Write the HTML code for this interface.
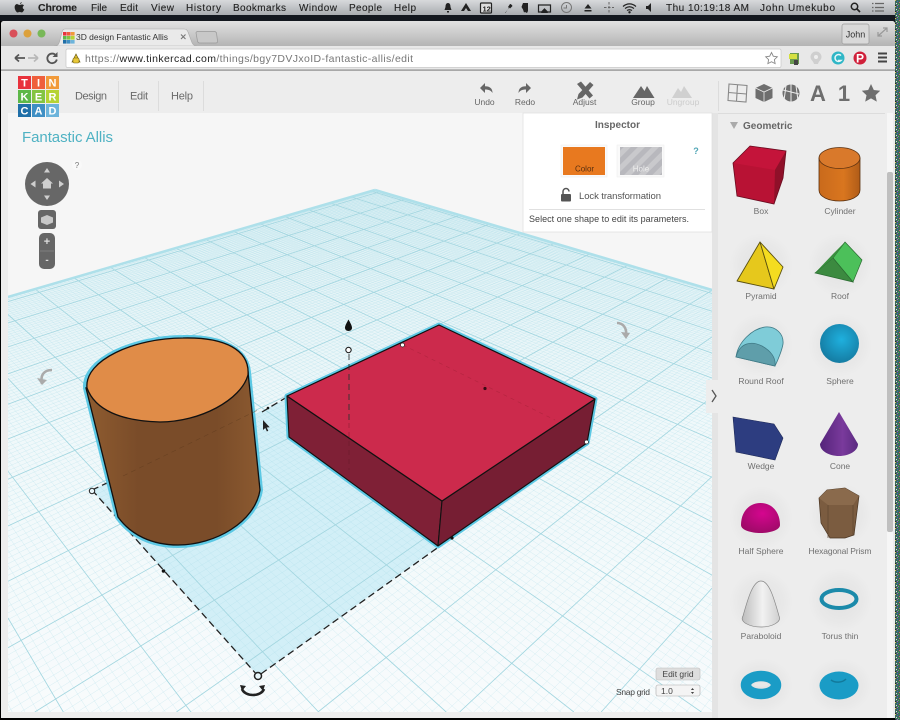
<!DOCTYPE html>
<html><head><meta charset="utf-8"><title>Tinkercad</title>
<style>
html,body{margin:0;padding:0;background:#000;width:900px;height:720px;overflow:hidden}
svg{display:block;filter:blur(.35px)}
text{font-family:"Liberation Sans",sans-serif}
</style></head><body>
<svg xmlns="http://www.w3.org/2000/svg" width="900" height="720" viewBox="0 0 900 720">
<defs>
<linearGradient id="mb" x1="0" y1="0" x2="0" y2="1"><stop offset="0" stop-color="#d8dadc"/><stop offset="1" stop-color="#a9acb0"/></linearGradient>
<linearGradient id="tb" x1="0" y1="0" x2="0" y2="1"><stop offset="0" stop-color="#e2e2e2"/><stop offset="1" stop-color="#b4b4b4"/></linearGradient>
<linearGradient id="pl" x1="0" y1="190" x2="0" y2="712" gradientUnits="userSpaceOnUse"><stop offset="0" stop-color="#dcf0f4"/><stop offset=".45" stop-color="#eff8fa"/><stop offset="1" stop-color="#f8fbfc"/></linearGradient>
<linearGradient id="cyl" x1="0" y1="0" x2="1" y2="0"><stop offset="0" stop-color="#8f5c30"/><stop offset=".3" stop-color="#7a4c29"/><stop offset=".75" stop-color="#7a4c29"/><stop offset="1" stop-color="#8c5a30"/></linearGradient>
<linearGradient id="icyl" x1="0" y1="0" x2="1" y2="0"><stop offset="0" stop-color="#c96a1c"/><stop offset=".6" stop-color="#d9761f"/><stop offset="1" stop-color="#b05c18"/></linearGradient>
<radialGradient id="isph" cx=".55" cy=".4" r=".65"><stop offset="0" stop-color="#1fb0de"/><stop offset="1" stop-color="#14789e"/></radialGradient>
<radialGradient id="ihalf" cx=".55" cy=".35" r=".7"><stop offset="0" stop-color="#d5068f"/><stop offset="1" stop-color="#9c0a66"/></radialGradient>
<linearGradient id="ipar" x1="0" y1="0" x2="1" y2="0"><stop offset="0" stop-color="#bdbdbd"/><stop offset=".55" stop-color="#f2f2f2"/><stop offset="1" stop-color="#cfcfcf"/></linearGradient>
<linearGradient id="icone" x1="0" y1="0" x2="1" y2="0"><stop offset="0" stop-color="#54247a"/><stop offset=".6" stop-color="#7a3a9c"/><stop offset="1" stop-color="#5a2a80"/></linearGradient>
<radialGradient id="sh"><stop offset="0" stop-color="#000" stop-opacity=".05"/><stop offset=".7" stop-color="#000" stop-opacity=".02"/><stop offset="1" stop-color="#000" stop-opacity="0"/></radialGradient>
<pattern id="hole" width="10" height="10" patternUnits="userSpaceOnUse" patternTransform="rotate(45)"><rect width="10" height="10" fill="#c9c9cc"/><rect width="5" height="10" fill="#b8b8bd"/></pattern>
<pattern id="noise" width="5" height="6" patternUnits="userSpaceOnUse"><rect width="5" height="6" fill="#3c6a5a"/><rect width="1" height="1" fill="#d8c060"/><rect x="2" y="1" width="1" height="1" fill="#4060c0"/><rect x="4" y="2" width="1" height="1" fill="#d06070"/><rect x="1" y="3" width="1" height="1" fill="#e0e0e0"/><rect x="3" y="4" width="1" height="1" fill="#60b060"/><rect y="5" width="1" height="1" fill="#202030"/><rect x="2" y="5" width="1" height="1" fill="#a060c0"/></pattern>
<clipPath id="plane"><polygon points="375,190 8,297 8,712 712,712 712,290"/></clipPath>
<clipPath id="canvas"><rect x="8" y="113" width="704" height="599"/></clipPath>
</defs>

<rect width="900" height="720" fill="#000"/>
<!-- desktop strip -->
<rect x="0" y="15" width="900" height="6" fill="#14181f"/>
<rect x="895" y="0" width="5" height="720" fill="url(#noise)"/>
<!-- menu bar -->
<rect width="895" height="15" fill="url(#mb)"/>
<g font-size="10" fill="#222" stroke="#222" stroke-width=".12">
<path d="M20 3.500c.6-.9 1.400-1.200 1.600-1.400 0 .9-.6 1.600-1.600 1.800zM17.500 4.500c1 0 1.400.5 2.200.5s1.300-.6 2.400-.5c.8 0 1.400.4 1.800 1-1.800 1.200-1.400 3.300.3 4-.5 1.300-1.500 2.900-2.500 2.900-.8 0-1.100-.5-2-.5s-1.300.5-2 .5c-1.300 0-3-2.900-3-5.200 0-2 1.200-3.200 2.800-3.200z" fill="#222"/>
<text x="38" y="11" font-weight="bold" font-size="10.500" textLength="39">Chrome</text>
<text x="91" y="11" textLength="16">File</text>
<text x="120" y="11" textLength="18">Edit</text>
<text x="151" y="11" textLength="23">View</text>
<text x="186" y="11" textLength="35">History</text>
<text x="233" y="11" textLength="53">Bookmarks</text>
<text x="299" y="11" textLength="38">Window</text>
<text x="349" y="11" textLength="33">People</text>
<text x="394" y="11" textLength="22">Help</text>
<text x="666" y="11" textLength="83">Thu 10:19:18 AM</text>
<text x="760" y="11" textLength="75">John Umekubo</text>
</g>
<!-- menu extras -->
<g fill="#222">
<path d="M448 3c2 0 2.500 2 2.500 4l1 3h-7l1-3c0-2 .5-4 2.500-4zM447 11h2v1.500h-2z"/>
<path d="M466 3l2.500 4 2.500 4h-3l-2-3-2 3h-3l2.500-4z"/>
<rect x="480.500" y="3" width="11" height="10" rx="1" fill="#ddd" stroke="#222" stroke-width="1.200"/>
<text x="482.500" y="11.500" font-size="7.500" font-weight="bold">12</text>
<path d="M505 13l4-5-1-1 2-3c1 0 2 1 2.500 2l-2.500 2.500-1-1-3.500 5.500z"/>
<path d="M523 3h5v8l-1 2-2-1-1 .5-1-3-1.500-2.500z"/>
<path d="M538.500 5h12v7h-3l-3-3-3 3h-3z" fill="none" stroke="#222" stroke-width="1.200"/><path d="M541 13l3.500-4 3.500 4z"/>
<circle cx="566.500" cy="7.500" r="5" fill="none" stroke="#777"/><path d="M566.500 5v3h-3" fill="none" stroke="#777"/>
<path d="M588 4l3.500 4.500h-7zM584.500 10h7v1.500h-7z"/>
<path d="M609 2v11M604 7.500h10" stroke="#666" stroke-width="1" stroke-dasharray="2.500 1.500"/>
<path d="M623 6.500c4-3.500 9-3.500 13 0M625 8.500c3-2.300 6-2.300 9 0M627 10.500c1.600-1 3.400-1 5 0" fill="none" stroke="#222" stroke-width="1.200"/><circle cx="629.500" cy="12.300" r="1.200"/>
<path d="M646 6h2l3-3v9l-3-3h-2z"/>
<circle cx="854.500" cy="6.500" r="3.200" fill="none" stroke="#222" stroke-width="1.500"/><path d="M857 9l3 3" stroke="#222" stroke-width="1.700"/>
<path d="M872 3.500h1.500M875 3.500h9M872 7.500h1.500M875 7.500h9M872 11h1.500M875 11h9" stroke="#666" stroke-width="1.200"/>
</g>

<!-- window chrome -->
<path d="M1 718V24q0-3 3-3H892q3 0 3 3V718z" fill="#ededed"/>
<path d="M1 46V24q0-3 3-3H892q3 0 3 3V46z" fill="url(#tb)"/>
<circle cx="13.500" cy="33.500" r="4" fill="#d9505a"/><circle cx="27.500" cy="33.500" r="4" fill="#dca13c"/><circle cx="41.500" cy="33.500" r="4" fill="#78b858"/>
<path d="M54 46c4 0 5-2 6-6l2-8q.8-3 3-3H184q3 0 4 3l3 8c1 3 2 6 6 6z" fill="#eaeaea" stroke="#aaa" stroke-width=".6"/>
<path d="M196 33q0-1.500 2-1.500h16q2 0 2.500 1.500l1 8c.2 1.500-.5 2-2 2h-16q-1.500 0-2-2z" fill="#c8c8c8" stroke="#999" stroke-width=".7"/>
<g>
<rect x="63" y="32" width="3.600" height="3.600" fill="#e8323c"/><rect x="67" y="32" width="3.600" height="3.600" fill="#ef5a3a"/><rect x="71" y="32" width="3.600" height="3.600" fill="#f19a3a"/>
<rect x="63" y="36" width="3.600" height="3.600" fill="#5db848"/><rect x="67" y="36" width="3.600" height="3.600" fill="#84c441"/><rect x="71" y="36" width="3.600" height="3.600" fill="#b6d334"/>
<rect x="63" y="40" width="3.600" height="3.600" fill="#1f6fa8"/><rect x="67" y="40" width="3.600" height="3.600" fill="#3f8fc4"/><rect x="71" y="40" width="3.600" height="3.600" fill="#6db4db"/>
</g>
<text x="76" y="40" font-size="8.500" fill="#333" textLength="92">3D design Fantastic Allis</text>
<path d="M181 34.500l4.500 4.500M185.500 34.500l-4.500 4.500" stroke="#777" stroke-width="1.100"/>
<rect x="842" y="24" width="27" height="20" rx="2" fill="#d9d9d9" stroke="#999" stroke-width=".7"/>
<text x="855.500" y="37.500" font-size="9" fill="#333" text-anchor="middle">John</text>
<path d="M878 36l9-8M883 28h4v4M878 32v4h4" stroke="#999" fill="none" stroke-width="1.200"/>
<!-- toolbar -->
<rect x="1" y="46" width="894" height="24" fill="#e8e8e8"/>
<rect x="1" y="69.500" width="894" height="1.200" fill="#8a8a8a"/>
<rect x="66" y="49" width="715" height="18.500" rx="1.500" fill="#fff" stroke="#c8c8c8" stroke-width=".7"/>
<path d="M15 58h10M15 58l4-3.500M15 58l4 3.500" stroke="#555" stroke-width="1.700" fill="none"/>
<path d="M28 58h10M38 58l-4-3.500M38 58l-4 3.500" stroke="#b8b8b8" stroke-width="1.700" fill="none"/>
<path d="M56 55.500a4.800 4.800 0 1 0 .8 4" stroke="#555" stroke-width="1.800" fill="none"/><path d="M57.500 52v5h-5z" fill="#555"/>
<path d="M72 62l4-8 4 8z" fill="#e0c030" stroke="#6a5a10" stroke-width=".7"/><rect x="73" y="58" width="6" height="5" rx="1" fill="#e8c838" stroke="#6a5a10" stroke-width=".5"/>
<text x="85" y="62" font-size="10.500" fill="#777" textLength="328"><tspan>https://</tspan><tspan fill="#222">www.tinkercad.com</tspan><tspan>/things/bgy7DVJxoID-fantastic-allis/edit</tspan></text>
<path d="M771.500 52.500l1.800 3.700 4 .6-2.900 2.800.7 4-3.600-1.900-3.600 1.900.7-4-2.900-2.800 4-.6z" fill="#fff" stroke="#888" stroke-width=".9"/>
<rect x="790" y="53" width="9" height="11" fill="#6a9a50"/><path d="M789 54h8v5h-8z" fill="#d4e040"/><rect x="794" y="60" width="4" height="5" fill="#444"/>
<path d="M816 51.500a5.500 5.500 0 0 1 5.500 5.500c0 3-3 4-3.500 7h-4c-.5-3-3.500-4-3.500-7a5.500 5.500 0 0 1 5.500-5.500z" fill="#cfcfcf"/><circle cx="816" cy="57" r="2" fill="#eee"/>
<circle cx="838" cy="58" r="6.500" fill="#2fb6c6"/><path d="M841 55.500a3.500 3.500 0 1 0 0 5h-3" stroke="#e8f8fa" stroke-width="1.500" fill="none"/>
<circle cx="860" cy="58" r="6.500" fill="#d0203a"/><text x="860" y="62.500" font-size="12" font-weight="bold" fill="#fff" text-anchor="middle">P</text>
<path d="M878 53.500h9M878 57.500h9M878 61.500h9" stroke="#444" stroke-width="1.900"/>
<!-- app header -->
<rect x="1" y="71" width="894" height="647" fill="#ededed"/>
<g stroke="#dcdcdc"><path d="M118.500 81v30M158.500 81v30M203.500 81v30M718.500 81v30"/></g>
<g font-size="11" fill="#6a6a6a">
<text x="75" y="99.500" textLength="32">Design</text><text x="130" y="99.500" textLength="18">Edit</text><text x="171" y="99.500" textLength="22">Help</text>
</g>
<!-- canvas -->
<rect x="8" y="113" width="704" height="599" fill="#f6f6f6"/>
<g clip-path="url(#canvas)">
<polygon points="375,190 8,297 8,712 712,712 712,290" fill="url(#pl)"/>
<polygon points="92,490 258,676 586,441 403,345" fill="#d2eff7"/>
<g id="grid" clip-path="url(#plane)"></g>
<path d="M375 190L8 297" stroke="#aee0ea" stroke-width="2.600" fill="none"/>
<path d="M375 190L712 290" stroke="#aee0ea" stroke-width="2.600" fill="none"/>
</g>
<!-- logo -->
<g font-size="11" font-weight="bold" fill="#fff" text-anchor="middle">
<rect x="18" y="76" width="13" height="13" fill="#e8323c"/><text x="24.500" y="86.500">T</text>
<rect x="32" y="76" width="13" height="13" fill="#ef5f3c"/><text x="38.500" y="86.500">I</text>
<rect x="46" y="76" width="13" height="13" fill="#f19a3a"/><text x="52.500" y="86.500">N</text>
<rect x="18" y="90" width="13" height="13" fill="#5db848"/><text x="24.500" y="100.500">K</text>
<rect x="32" y="90" width="13" height="13" fill="#84c441"/><text x="38.500" y="100.500">E</text>
<rect x="46" y="90" width="13" height="13" fill="#b6d334"/><text x="52.500" y="100.500">R</text>
<rect x="18" y="104" width="13" height="13" fill="#1f6fa8"/><text x="24.500" y="114.500">C</text>
<rect x="32" y="104" width="13" height="13" fill="#3f8fc4"/><text x="38.500" y="114.500">A</text>
<rect x="46" y="104" width="13" height="13" fill="#6db4db"/><text x="52.500" y="114.500">D</text>
</g>
<!-- title -->
<text x="22" y="142" font-size="15" fill="#4fb2c3" textLength="91">Fantastic Allis</text>
<!-- nav cube -->
<circle cx="47" cy="184" r="22" fill="#676767"/>
<g fill="#cfcfcf"><path d="M47 168l3 4.500h-6zM47 200l-3-4.500h6zM30.500 184l5-3.500v7zM64 184l-5-3.500v7z"/><path d="M47 178l6 5.500h-2v5h-8v-5h-2z"/></g>
<circle cx="77" cy="165" r="5" fill="#f9f9f9"/><text x="77" y="168" font-size="8" fill="#777" text-anchor="middle">?</text>
<rect x="38" y="210" width="18" height="19" rx="3" fill="#666"/>
<path d="M47 215l6 2.500v5l-6 2.500-6-2.500v-5z" fill="#c8c8c8"/>
<rect x="39" y="233" width="16" height="36" rx="5" fill="#666"/><path d="M40 251h14" stroke="#888" stroke-width=".7"/>
<text x="47" y="245" font-size="11" font-weight="bold" fill="#ddd" text-anchor="middle">+</text><text x="47" y="263" font-size="10" font-weight="bold" fill="#ddd" text-anchor="middle">-</text>

<!-- rotate arrows -->
<path d="M52 370c-8 0-12 5-10 14" fill="none" stroke="#aaa" stroke-width="2.600"/><path d="M37 378l5 7 5-5z" fill="#aaa"/>
<path d="M617 323c6 0 10 5 9 12" fill="none" stroke="#aaa" stroke-width="2.600"/><path d="M621 332l5 7 4-6z" fill="#aaa"/>

<!-- selection dashes -->
<path d="M92 490L258 676L440 546M92 490L122 476M262 412L287 397" fill="none" stroke="#222" stroke-width="1.300" stroke-dasharray="7 4"/>

<!-- cylinder -->
<path d="M86 388L118 517C131 535 152 545 178 545C215 545 255 522 260 490L248 372C246 350 222 337 183 338C135 338 84 360 86 388Z" fill="#5cc8e4" stroke="#5cc8e4" stroke-width="6"/>
<path d="M86 388L118 517C131 535 152 545 178 545C215 545 255 522 260 490L248 372Z" fill="url(#cyl)" stroke="#111" stroke-width="1.300"/>
<path d="M87 388C84 360 135 338 183 338C225 337 250 350 248 375C241 400 200 422 160 422C121 421 95 410 87 388Z" fill="#e08c48" stroke="#111" stroke-width="1.300"/>
<path d="M123 476L258 410" fill="none" stroke="#5e3a1e" stroke-width=".6" stroke-dasharray="5 4" opacity=".6"/>

<!-- box -->
<polygon points="287,396 439,325 595,399 587,443 438,546 289,437" fill="#5cc8e4" stroke="#5cc8e4" stroke-width="5" stroke-linejoin="round"/>
<polygon points="287,396 442,501 438,546 289,437" fill="#7f2036" stroke="#111" stroke-width="1.100" stroke-linejoin="round"/>
<polygon points="442,501 595,399 587,443 438,546" fill="#761e33" stroke="#111" stroke-width="1.100" stroke-linejoin="round"/>
<polygon points="287,396 439,325 595,399 442,501" fill="#cc2a4c" stroke="#111" stroke-width="1.200" stroke-linejoin="round"/>
<path d="M403 345L555 420" stroke="#b52540" stroke-width=".7" stroke-dasharray="4 4" fill="none"/>
<path d="M349 354V423" stroke="#333" stroke-width=".9" stroke-dasharray="6 4" fill="none"/>
<path d="M349 423V470" stroke="#5d1727" stroke-width=".6" stroke-dasharray="5 4" fill="none" opacity=".6"/>

<!-- handles -->
<path d="M348.500 319.500c1.600 3 3.500 6 3.500 8.300 0 2-1.500 3.200-3.500 3.200s-3.500-1.200-3.500-3.200c0-2.300 1.900-5.300 3.500-8.300z" fill="#111"/>
<circle cx="348.500" cy="350" r="2.700" fill="#fff" stroke="#222" stroke-width="1.100"/>
<circle cx="402.500" cy="345" r="2" fill="#fff" stroke="#222" stroke-width=".7"/>
<circle cx="586.500" cy="442" r="2" fill="#fff" stroke="#222" stroke-width=".7"/>
<circle cx="92" cy="491" r="2.700" fill="#e8f6fa" stroke="#222" stroke-width="1"/>
<circle cx="258" cy="676" r="3.500" fill="#e8f6fa" stroke="#222" stroke-width="1.500"/>
<circle cx="163.500" cy="571" r="1.800" fill="#111"/><circle cx="485" cy="388.500" r="1.600" fill="#3a0a14"/><circle cx="452" cy="538" r="1.600" fill="#111"/><circle cx="268" cy="408" r="1.300" fill="#111"/>
<path d="M242 689c3 8 19 8 22 0" fill="none" stroke="#222" stroke-width="2.600"/><path d="M240 685l6 1-4 5zM265 685l-6 1 4 5z" fill="#222"/>
<path d="M263 420l0 10 2.300-2 1.600 3.500 1.400-.7-1.600-3.300 3-.3z" fill="#222"/>

<!-- Edit grid / snap -->
<rect x="656" y="668" width="44" height="12" rx="2" fill="#dedede" stroke="#bbb" stroke-width=".6"/>
<text x="678" y="677" font-size="8.500" fill="#444" text-anchor="middle">Edit grid</text>
<text x="616" y="695" font-size="8.500" fill="#444" textLength="34">Snap grid</text>
<rect x="656" y="685" width="44" height="11" rx="2" fill="#f4f4f4" stroke="#aaa" stroke-width=".6"/>
<text x="661" y="694" font-size="8.500" fill="#444">1.0</text>
<path d="M692.500 688l1.600 2h-3.200zM692.500 694l1.600-2h-3.200z" fill="#444"/>

<!-- right of canvas -->
<rect x="712" y="113" width="6" height="605" fill="#e4e4e4"/>
<rect x="706" y="380" width="12" height="33" fill="#ededed"/>
<path d="M712 390l4 6-4 6" fill="none" stroke="#555" stroke-width="1.300"/>
<!-- inspector -->
<rect x="523" y="113" width="189" height="119" fill="#fff" stroke="#ddd" stroke-width=".7"/>
<text x="617.500" y="128" font-size="10" font-weight="bold" fill="#666" text-anchor="middle">Inspector</text>
<rect x="561" y="145" width="46" height="32" fill="#fafafa" stroke="#eee" stroke-width=".6"/>
<rect x="563" y="147" width="42" height="28" fill="#e8791f"/>
<text x="584.500" y="171.500" font-size="8" fill="#5a3010" text-anchor="middle">Color</text>
<rect x="617" y="145" width="47" height="32" fill="#fafafa" stroke="#eee" stroke-width=".6"/>
<rect x="620" y="147" width="42" height="28" fill="url(#hole)"/>
<text x="641" y="171.500" font-size="8" fill="#eee" text-anchor="middle">Hole</text>
<text x="696" y="154" font-size="9" font-weight="bold" fill="#4fa5b5" text-anchor="middle">?</text>
<rect x="561" y="194" width="10" height="7.500" rx="1" fill="#555"/><path d="M563 194v-2.500a3 3 0 0 1 6 0" fill="none" stroke="#555" stroke-width="1.500"/>
<text x="579" y="199" font-size="9.500" fill="#555" textLength="82">Lock transformation</text>
<path d="M529 209.500H705" stroke="#e0e0e0"/>
<text x="529" y="222" font-size="9" fill="#444" textLength="160">Select one shape to edit its parameters.</text>

<!-- header tools -->
<g fill="#666">
<path d="M480 88l5-5v3.200c5 0 7.500 2.300 7.500 6.800-1.300-2.300-3.500-3.500-7.500-3.500v3.500z" />
<path d="M531 88l-5-5v3.200c-5 0-7.500 2.300-7.500 6.800 1.300-2.300 3.500-3.500 7.500-3.500v3.500z"/>
<path d="M577 84l4-2.500 12 14-3.500 3zM590 82l3.500 3-11 12.500-5.500 2 1.500-5.500z"/>
<path d="M633 98l8-12 3.500 5 2.500-5 7.500 12z"/>
<path d="M672 98l6-10 3 4 3-6 8 12z" fill="#d0d0d0"/>
</g>
<g font-size="8.500" fill="#666" text-anchor="middle">
<text x="484.500" y="105">Undo</text><text x="525" y="105">Redo</text><text x="584.500" y="105">Adjust</text><text x="643" y="105">Group</text><text x="683" y="105" fill="#ccc">Ungroup</text>
</g>
<g fill="#6e6e6e">
<g fill="none" stroke="#888" stroke-width="1.100"><path d="M729 84l18 1.500-1 16.500-18-1.500zM737.500 84.500l-1 17M728.500 92.500l18 1.500"/></g>
<path d="M764 84l8.500 4v10l-8.500 4-8.500-4V88z"/><path d="M755.500 88l8.500 4 8.500-4M764 92v10" stroke="#ededed" fill="none" stroke-width=".8"/>
<circle cx="791" cy="93" r="8.500"/><path d="M786 85.500l-2 15M791 84.500v17M796 85.500l2 15M783 90l16 4" stroke="#ededed" fill="none" stroke-width="1"/>
<text x="818" y="101" font-size="22" font-weight="bold" text-anchor="middle">A</text>
<text x="844" y="101" font-size="22" font-weight="bold" text-anchor="middle">1</text>
<path d="M871 84l2.800 6 6.400.8-4.700 4.400 1.300 6.400-5.800-3.200-5.800 3.200 1.300-6.400-4.700-4.400 6.400-.8z"/>
</g>

<!-- sidebar -->
<rect x="718" y="113" width="167" height="1" fill="#dcdcdc"/>
<rect x="887" y="113" width="6" height="605" fill="#f6f6f6"/>
<rect x="887" y="172" width="6" height="360" rx="2" fill="#bfbfbf"/>
<path d="M730 122h8l-4 7z" fill="#aaa"/>
<text x="743" y="129" font-size="10" font-weight="bold" fill="#666">Geometric</text>

<g fill="url(#sh)"><ellipse cx="761" cy="265" rx="32" ry="32"/><ellipse cx="840" cy="265" rx="32" ry="32"/><ellipse cx="761" cy="345" rx="32" ry="32"/><ellipse cx="840" cy="345" rx="32" ry="32"/><ellipse cx="761" cy="518" rx="32" ry="32"/><ellipse cx="840" cy="515" rx="32" ry="32"/><ellipse cx="761" cy="602" rx="32" ry="32"/><ellipse cx="840" cy="600" rx="32" ry="32"/><ellipse cx="761" cy="686" rx="32" ry="28"/><ellipse cx="840" cy="686" rx="32" ry="28"/></g>

<!-- Box -->
<polygon points="750,146 786,151 783,178 774,204 737,196 733,163" fill="#b81234"/>
<polygon points="750,146 786,151 775,170 733,163" fill="#c4143a"/>
<polygon points="786,151 783,178 774,204 775,170" fill="#8f1029"/>
<path d="M750 146L786 151 783 178 774 204 737 196 733 163Z" fill="none" stroke="#6a0c20" stroke-width=".8"/>
<!-- Cylinder -->
<path d="M819 158V190C819 197 829 201 839.500 201S860 197 860 190V158Z" fill="url(#icyl)" stroke="#5a3010" stroke-width=".8"/>
<ellipse cx="839.500" cy="158" rx="20.500" ry="10.500" fill="#d9792b" stroke="#5a3010" stroke-width=".8"/>
<!-- Pyramid -->
<polygon points="760,242 737,281 774,289" fill="#e6c81c" stroke="#5a5010" stroke-width=".9" stroke-linejoin="round"/>
<polygon points="760,242 774,289 783,267" fill="#f4dc20" stroke="#5a5010" stroke-width=".9" stroke-linejoin="round"/>
<!-- Roof -->
<polygon points="845,242 815,273 833,258" fill="#3a8f3e"/>
<polygon points="845,242 862,260 853,282 833,258" fill="#4cc05a" stroke="#2a6a30" stroke-width=".7"/>
<polygon points="815,273 833,258 853,282" fill="#3c8a40" stroke="#2a6a30" stroke-width=".7"/>
<polygon points="815,273 833,254 845,242 833,258" fill="#3a8f3e"/>
<!-- Round roof -->
<path d="M736 357C738 342 752 329 765 327C776 326 784 334 783 344C782 350 778 360 775 366Z" fill="#7fccd8" stroke="#3f7a86" stroke-width=".8"/>
<path d="M736 357C740 342 752 341 762 346C771 351 776 358 775 366Z" fill="#5f9eaa" stroke="#3f7a86" stroke-width=".8"/>
<!-- Sphere -->
<circle cx="839.500" cy="343.500" r="19.500" fill="url(#isph)"/>
<!-- Wedge -->
<polygon points="733,417 774,424 783,438 775,460 736,452" fill="#2d3d80" stroke="#1e2a58" stroke-width=".6"/>
<!-- Cone -->
<path d="M839 412L820 444C820 451 829 456 839 456S858 451 858 444Z" fill="url(#icone)"/>
<!-- Half sphere -->
<path d="M741 525C741 512 749 503 760.500 503S780 512 780 525C780 530 770 533 760.500 533S741 530 741 525Z" fill="url(#ihalf)"/>
<!-- Hex prism -->
<polygon points="819,498 827,490 845,488 859,496 854,535 845,538 830,538 821,523" fill="#7b5c40" stroke="#4a3522" stroke-width=".7"/>
<polygon points="819,498 827,490 845,488 859,496 853,505 828,505" fill="#8a6a4c"/>
<path d="M828 505V538M853 505V535" stroke="#5f4630" stroke-width=".7"/>
<!-- Paraboloid -->
<path d="M761 581C769 581 774 598 779 616C782 622 772 627 761 627S739 622 743 616C748 598 753 581 761 581Z" fill="url(#ipar)" stroke="#888" stroke-width=".7"/>
<!-- Torus thin -->
<ellipse cx="839" cy="599" rx="17.500" ry="9" fill="#e8e8e8" stroke="#1b8aaa" stroke-width="4"/>
<!-- Torus -->
<ellipse cx="761" cy="685" rx="15" ry="9" fill="none" stroke="#1a9cc6" stroke-width="10.500"/>
<ellipse cx="761" cy="684.500" rx="7" ry="2.300" fill="#e8e8e8"/>
<!-- Torus 3 -->
<ellipse cx="839" cy="685.500" rx="19.500" ry="14" fill="#1a9cc6"/>
<path d="M831 680c4 3 11 3 15-1" stroke="#127a9c" stroke-width="1.500" fill="none"/>

<g font-size="8.500" fill="#707070" text-anchor="middle">
<text x="761" y="214">Box</text><text x="840" y="214">Cylinder</text>
<text x="761" y="299">Pyramid</text><text x="840" y="299">Roof</text>
<text x="761" y="384">Round Roof</text><text x="840" y="384">Sphere</text>
<text x="761" y="469">Wedge</text><text x="840" y="469">Cone</text>
<text x="761" y="554">Half Sphere</text><text x="840" y="554" textLength="63">Hexagonal Prism</text>
<text x="761" y="639">Paraboloid</text><text x="840" y="639">Torus thin</text>
</g>
</svg>
<script>
(function(){
var g=document.getElementById('grid'),NS='http://www.w3.org/2000/svg',H=720,m='',M='';
var X0=8,X1=712,Y0=185,Y1=712;
function clip(x0,y0,x1,y1){
  var t0=0,t1=1,dx=x1-x0,dy=y1-y0,p=[-dx,dx,-dy,dy],q=[x0-X0,X1-x0,y0-Y0,Y1-y0];
  for(var i=0;i<4;i++){
    if(p[i]===0){if(q[i]<0)return '';continue;}
    var r=q[i]/p[i];
    if(p[i]<0){if(r>t1)return '';if(r>t0)t0=r;}else{if(r<t0)return '';if(r<t1)t1=r;}
  }
  return 'M'+(x0+t0*dx).toFixed(1)+' '+(y0+t0*dy).toFixed(1)+'L'+(x0+t1*dx).toFixed(1)+' '+(y0+t1*dy).toFixed(1);
}
function fam(vx,vy,phase,S,from,to){
  for(var k=from*10;k<=to*10;k++){
    var x=phase+k*S/10,seg=clip(vx,vy,vx+(x-vx)*1.2,vy+(H-vy)*1.2);
    if(k%10===0)M+=seg;else m+=seg;
  }
}
fam(1313,-84,22,143,-13,5);
fam(-375,-33,197,129,-3,20);
var a=document.createElementNS(NS,'path');a.setAttribute('d',m);a.setAttribute('stroke','#a5dbe6');a.setAttribute('stroke-width','.35');a.setAttribute('fill','none');a.setAttribute('opacity','.6');g.appendChild(a);
var b=document.createElementNS(NS,'path');b.setAttribute('d',M);b.setAttribute('stroke','#a3d6e0');b.setAttribute('stroke-width','.85');b.setAttribute('fill','none');g.appendChild(b);
})();
</script>
</body></html>
